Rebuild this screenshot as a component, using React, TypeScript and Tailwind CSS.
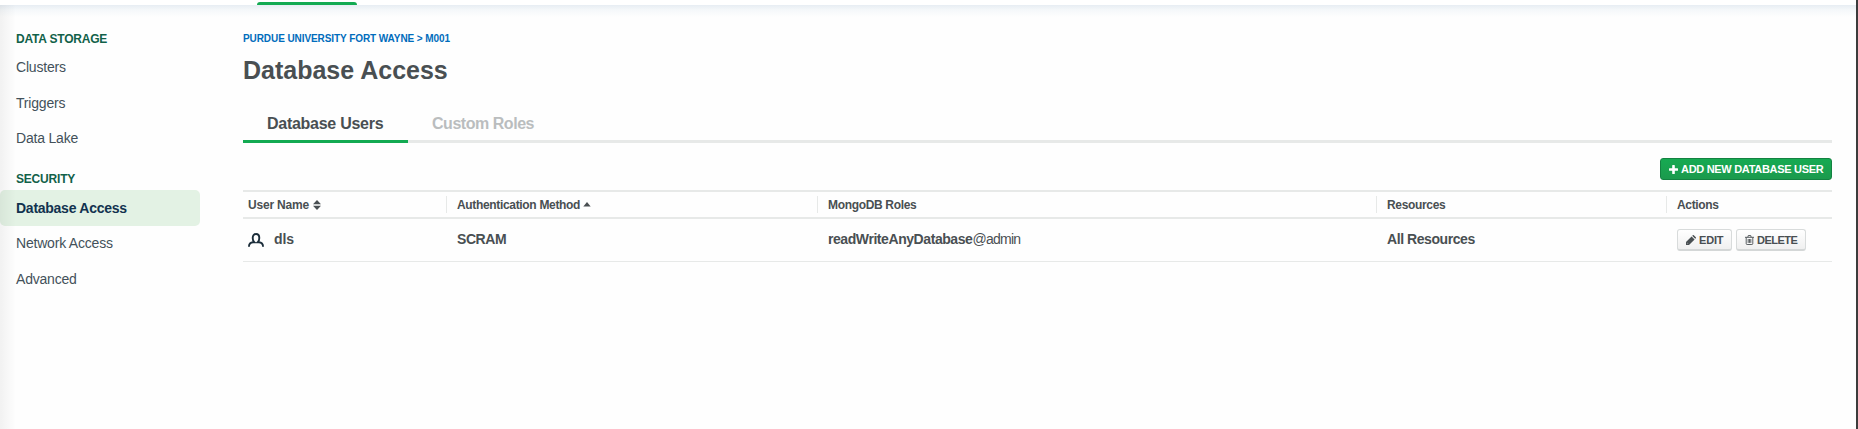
import type { ReactNode } from "react";

const sections = [
  { title: "DATA STORAGE", items: ["Clusters", "Triggers", "Data Lake"] },
  { title: "SECURITY", items: ["Database Access", "Network Access", "Advanced"] },
];

function NavItem({ label, active }: { label: string; active: boolean }) {
  return (
    <a
      className={
        active
          ? "flex h-9 items-center rounded-[5px] bg-[#e3f2e4] pl-4 text-[14px] font-bold tracking-[-0.26px] text-[#12324f]"
          : "flex h-[35.5px] items-center pl-4 text-[14px] tracking-[-0.2px] text-[#43515a]"
      }
    >
      {label}
    </a>
  );
}

function Sidebar() {
  return (
    <nav className="w-[200px] shrink-0 pt-[24px]">
      {sections.map((section) => (
        <div key={section.title} className="mb-[12.5px]">
          <h2 className="flex h-[21px] items-start pt-px pl-4 text-[12px] leading-[18px] font-bold tracking-[-0.2px] text-[#116149]">
            {section.title}
          </h2>
          {section.items.map((item) => (
            <NavItem key={item} label={item} active={item === "Database Access"} />
          ))}
        </div>
      ))}
    </nav>
  );
}

function UserIcon() {
  return (
    <svg width="16" height="14" viewBox="0 0 16 14" fill="none" stroke="#1b2d3a" strokeWidth="1.9">
      <path d="M.95 13.700C.95 11 2.700 9.300 5.200 9.200H6.300C5.200 8.300 4.700 6.700 4.700 5 4.700 2.500 6 1 8 1s3.300 1.500 3.300 4c0 1.700-.5 3.300-1.600 4.200h1.100c2.500.1 4.250 1.800 4.250 4.500" />
    </svg>
  );
}

function SortBoth() {
  return (
    <svg width="8" height="10" viewBox="0 0 8 10" fill="#494f52">
      <path d="M4 0 8 4.300H0ZM4 10 0 5.700h8Z" />
    </svg>
  );
}

function SortUp() {
  return (
    <svg width="8" height="5" viewBox="0 0 8 5" fill="#494f52">
      <path d="M4 0 7.700 4.500H.3Z" />
    </svg>
  );
}

function PlusIcon() {
  return (
    <svg width="9" height="9" viewBox="0 0 9 9" fill="#fff" className="shrink-0">
      <path d="M3.200.5Q3.200 0 3.700 0h1.600q.5 0 .5.500v2.700h2.700q.5 0 .5.500v1.600q0 .5-.5.500H5.800v2.700q0 .5-.5.500H3.700q-.5 0-.5-.5V5.800H.5Q0 5.800 0 5.300V3.700q0-.5.500-.5h2.700Z" />
    </svg>
  );
}

function PencilIcon() {
  return (
    <svg width="10" height="10" viewBox="0 0 10 10" fill="#494f52">
      <path d="M0 10v-3L5.600 1.400l3 3L3 10ZM6.200.8l.6-.6q.5-.4 1 0l2 2q.4.5 0 1l-.6.6Z" />
      <path d="M.9 7.600 2.400 9.100H1.700V8.300H.9Z" fill="#f8f8f8" />
    </svg>
  );
}

function TrashIcon() {
  return (
    <svg width="9" height="10" viewBox="0 0 9 10" fill="none" stroke="#494f52" strokeWidth="0.9">
      <path d="M0 2.300h9M1.200 2.300v6.200q0 1 .9 1h4.800q.9 0 .9-1V2.300M2.800 2.300l.5-1.800h2.400l.5 1.800M3.200 4v3.900M4.500 4v3.900M5.800 4v3.900" />
    </svg>
  );
}

function SmallButton({ icon, label, className }: { icon: ReactNode; label: string; className: string }) {
  return (
    <button
      className={`flex h-[22px] items-center rounded-[3px] border border-b-2 border-[#d8dbdb] border-b-[#d4d7d7] bg-linear-to-b from-white to-[#f0f0f0] pt-px pl-2 text-[11px] font-bold text-[#494f52] ${className}`}
    >
      {icon}
      {label}
    </button>
  );
}

function HeaderCell({ children, first }: { children: ReactNode; first?: boolean }) {
  return (
    <div
      className={
        first
          ? "flex h-[17px] items-center gap-1 pl-[5px] tracking-[-0.2px]"
          : "flex h-[17px] items-center gap-[3px] border-l border-[#e7e9e8] pl-[10px]"
      }
    >
      {children}
    </div>
  );
}

const columns = "grid grid-cols-[203px_371px_559px_290px_166px] items-center";

export default function App() {
  return (
    <div className="relative flex h-[429px] w-[1858px] flex-col overflow-hidden bg-white font-['Liberation_Sans',sans-serif]">
      <header className="h-[5px] shrink-0 pt-[2px] pl-[257px]">
        <div className="h-[3px] w-[100px] rounded-t-[3px] bg-[#13aa52]" />
      </header>
      <div className="flex flex-1 bg-[linear-gradient(to_bottom,#e7edf3_0px,#f5f8fa_5px,#fefefe_12px)]">
        <Sidebar />
        <main className="ml-[43px] w-[1589px]">
          <div className="mt-[26px] flex h-[14px] items-center text-[10px] font-bold tracking-[-0.08px] text-[#006cbc]">
            PURDUE UNIVERSITY FORT WAYNE &gt; M001
          </div>
          <h1 className="mt-[10px] flex h-8 items-center text-[25px] font-bold text-[#494f52]">
            Database Access
          </h1>
          <div className="mt-[19px] flex h-[37px] border-b-[3px] border-[#e7e9e8] text-[16px] font-bold">
            <div className="flex h-[37px] w-[165px] items-center border-b-[3px] border-[#13aa52] pt-[2px] pl-6 tracking-[-0.27px] text-[#494f52]">
              Database Users
            </div>
            <div className="flex h-[34px] items-center pt-[2px] pl-6 tracking-[-0.46px] text-[#babdbe]">Custom Roles</div>
          </div>
          <div className="mt-[15px] flex justify-end">
            <button className="flex h-[22px] w-[172px] items-center gap-[3px] rounded-[3px] border border-[#138241] bg-linear-to-b from-[#16aa52] to-[#1b9a4d] pl-2 text-[11px] font-bold tracking-[-0.3px] whitespace-nowrap text-white">
              <PlusIcon />
              ADD NEW DATABASE USER
            </button>
          </div>
          <div className="mt-[10px] border-b border-[#e7e9e8]">
            <div
              className={`${columns} h-[29px] border-y-2 border-[#e7e9e8] text-[12px] font-bold tracking-[-0.33px] text-[#494f52]`}
            >
              <HeaderCell first>
                User Name
                <SortBoth />
              </HeaderCell>
              <HeaderCell>
                Authentication Method
                <SortUp />
              </HeaderCell>
              <HeaderCell>MongoDB Roles</HeaderCell>
              <HeaderCell>Resources</HeaderCell>
              <HeaderCell>Actions</HeaderCell>
            </div>
            <div className={`${columns} h-[42px] text-[14px] font-bold tracking-[-0.43px] text-[#494f52]`}>
              <div className="flex items-center gap-[10px] pl-[5px]">
                <UserIcon />
                <span className="-mt-px tracking-[-0.1px]">dls</span>
              </div>
              <div className="-mt-px pl-[11px]">SCRAM</div>
              <div className="-mt-px pl-[11px]">
                readWriteAnyDatabase<span className="font-normal tracking-[-0.75px]">@admin</span>
              </div>
              <div className="-mt-px pl-[11px]">All Resources</div>
              <div className="flex gap-1 pl-[11px]">
                <SmallButton icon={<PencilIcon />} label="EDIT" className="w-[55px] gap-[3px] tracking-[-0.2px]" />
                <SmallButton icon={<TrashIcon />} label="DELETE" className="w-[70px] gap-[3px] tracking-[-0.5px]" />
              </div>
            </div>
          </div>
        </main>
      </div>
      <div className="pointer-events-none absolute top-[5px] bottom-0 left-0 w-4 bg-linear-to-r from-black/5 to-transparent" />
      <div className="absolute inset-y-0 right-0 w-[2px] bg-[#3c3c3c]" />
    </div>
  );
}
